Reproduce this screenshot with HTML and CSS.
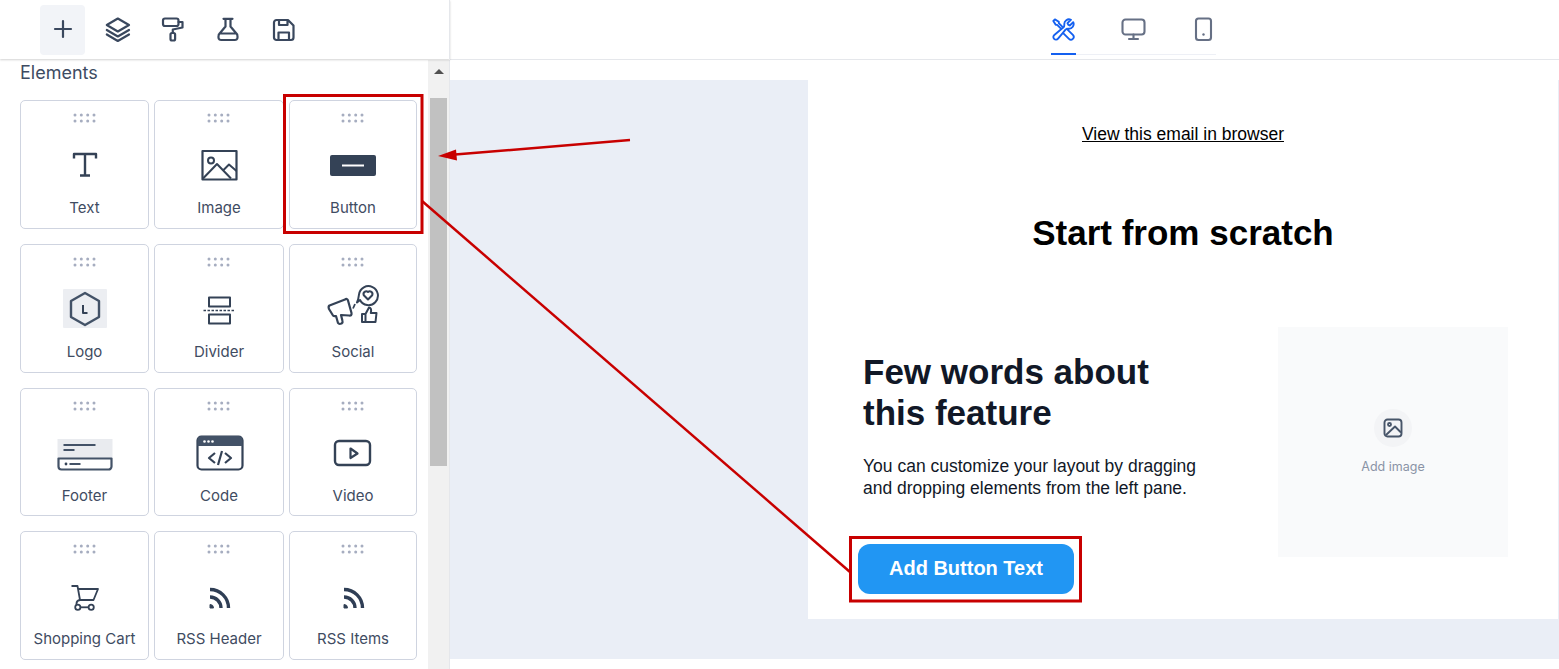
FILE: index.html
```html
<!DOCTYPE html>
<html>
<head>
    <meta charset='utf-8'>
    <title>Email Builder</title>
    <link rel="stylesheet" href="styles.css">
</head>
<body>
    <svg class="svg-defs" width="0" height="0">
        <symbol id="dots" viewBox="0 0 24 10">
            <g fill="#a6adc0">
                <circle cx="2" cy="2" r="1.500"/><circle cx="8.300" cy="2" r="1.500"/><circle cx="14.700" cy="2" r="1.500"/><circle cx="21" cy="2" r="1.500"/>
                <circle cx="2" cy="8" r="1.500"/><circle cx="8.300" cy="8" r="1.500"/><circle cx="14.700" cy="8" r="1.500"/><circle cx="21" cy="8" r="1.500"/>
            </g>
        </symbol>
        <symbol id="rss" viewBox="0 0 56 48">
            <path d="M19 17.500A18.500 18.500 0 0 1 37.500 36M19 25A11 11 0 0 1 30 36" fill="none" stroke="#2f3e55" stroke-width="3.400"/>
            <path d="M19 32.500a3.500 3.500 0 0 1 3.500 3.500h-3.500z" fill="#2f3e55"/>
        </symbol>
    </svg>

    <div class="div-app">
        <div class="div-side">
            <div class="div-toolbar">
                <button class="btn-tool btn-active">
                    <svg class="ico-28" viewBox="0 0 28 28"><path d="M14 6v16M6 14h16" stroke-width="2.200"/></svg>
                </button>
                <button class="btn-tool">
                    <svg class="ico-28" viewBox="0 0 28 28"><path d="M13.800 3.500L2.800 10l11 6.500L25 10zM2.800 15l11 6.500L25 15M2.800 19.500l11 6.500L25 19.500"/></svg>
                </button>
                <button class="btn-tool">
                    <svg class="ico-28" viewBox="0 0 28 28"><rect x="4" y="3.500" width="15.500" height="7.500" rx="2"/><path d="M19.500 7H23.500V12.500L13.800 14.500V18"/><rect x="11.500" y="18" width="4.600" height="7.500" rx="1.500"/></svg>
                </button>
                <button class="btn-tool">
                    <svg class="ico-28" viewBox="0 0 28 28"><path d="M9.500 3.800h9M11.500 4v7.500L4.800 19.500Q3.500 25 7 25h14q3.500 0 2.200-5.500L16.500 11.500V4M5.500 18.500h17"/></svg>
                </button>
                <button class="btn-tool">
                    <svg class="ico-28" viewBox="0 0 28 28"><path d="M7.500 5H19L24.500 10.500V22.500A2.500 2.500 0 0 1 22 25H7.500A2.500 2.500 0 0 1 5 22.500V7.500A2.500 2.500 0 0 1 7.500 5zM10 5.500V10H18.500V5.500M9.500 24.500V17.500H20V24.500"/></svg>
                </button>
            </div>

            <div class="div-panel">
                <div class="div-elements">
                    <div class="lbl-elements">Elements</div>
                    <div class="div-grid">
                        <div class="div-card">
                            <svg class="ico-dots"><use href="#dots"/></svg>
                            <svg class="ico-card" viewBox="0 0 56 48"><path d="M17 17.500V13H39V17.500M28 13V34.500M23 34.500H33" stroke-width="2.400"/></svg>
                            <label>Text</label>
                        </div>
                        <div class="div-card">
                            <svg class="ico-dots"><use href="#dots"/></svg>
                            <svg class="ico-card" viewBox="0 0 56 48"><rect x="11.500" y="10" width="34" height="28.500"  stroke-width="2.200"/><circle cx="20" cy="19.500" r="3" stroke-width="2"/><path d="M12 37.500L26 23L40 37.500M32.500 29L38 23.500L45.500 30" stroke-width="2"/></svg>
                            <label>Image</label>
                        </div>
                        <div class="div-card">
                            <svg class="ico-dots"><use href="#dots"/></svg>
                            <svg class="ico-card" viewBox="0 0 56 48"><rect x="5" y="14" width="46" height="21" rx="2" fill="#344256" stroke="none"/><path d="M17 24.500H39" stroke="#fff" stroke-width="2"/></svg>
                            <label>Button</label>
                        </div>
                        <div class="div-card">
                            <svg class="ico-dots"><use href="#dots"/></svg>
                            <svg class="ico-card" viewBox="0 0 56 48"><rect x="6" y="4" width="44" height="39" rx="1" fill="#eceef2" stroke="none"/><path d="M28 8L42 16V32L28 40L14 32V16z" stroke-width="2.400" stroke="#435267"/><path d="M26 20V28H30.500" stroke-width="2"/></svg>
                            <label>Logo</label>
                        </div>
                        <div class="div-card">
                            <svg class="ico-dots"><use href="#dots"/></svg>
                            <svg class="ico-card" viewBox="0 0 56 48"><rect x="18" y="12.500" width="21" height="9" stroke-width="2"/><rect x="18" y="29.500" width="21" height="9" stroke-width="2"/><path d="M12.500 25.500H44.500" stroke-width="1.300" stroke-dasharray="2.500 1.500"/></svg>
                            <label>Divider</label>
                        </div>
                        <div class="div-card">
                            <svg class="ico-dots"><use href="#dots"/></svg>
                            <svg class="ico-card ico-social" viewBox="0 0 56 48"><path d="M4.500 20.500Q3 21.500 4 24L8 30.500Q9 31.500 11 31L13 38Q14 39.500 16.500 38.500Q18 37.500 17.500 36L16 30L24 30.500Q27 31 26.500 28L23 15.500Q22 13 20 14.500z" stroke-width="2.200"/><path d="M28 23.500L30 19" stroke-width="1.800"/><path d="M32 17.500L35 15A9.500 9.500 0 1 0 34 9.500Q33.500 14 32 17.500z" stroke-width="2"/><path d="M43 14.500L38.800 10.200A2.700 2.700 0 0 1 43 7A2.700 2.700 0 0 1 47.200 10.200z" stroke-width="2"/><path d="M37 29H40.500V37H37zM40.500 29L44 22.500Q47 23 45.800 28H51.500L50.500 37H40.500" stroke-width="2"/></svg>
                            <label>Social</label>
                        </div>
                        <div class="div-card">
                            <svg class="ico-dots"><use href="#dots"/></svg>
                            <svg class="ico-card" viewBox="0 0 56 48"><rect x="0.500" y="10" width="55" height="20" fill="#e9ebef" stroke="none"/><path d="M6.500 16H38.500M6.500 21H17.500M12.500 35H23.500" stroke-width="2" stroke="#435267"/><path d="M1.500 29.500H54.500V37.500A3 3 0 0 1 51.500 40.500H4.500A3 3 0 0 1 1.500 37.500z" stroke-width="2.200" stroke="#435267"/><circle cx="9" cy="35" r="1.400" fill="#344256" stroke="none"/></svg>
                            <label>Footer</label>
                        </div>
                        <div class="div-card">
                            <svg class="ico-dots"><use href="#dots"/></svg>
                            <svg class="ico-card" viewBox="0 0 56 48"><rect x="6.500" y="7.500" width="45" height="33" rx="4" stroke-width="2.200"/><path d="M6.500 17V11A4 4 0 0 1 10.500 7H47.500A4 4 0 0 1 51.500 11V17z" fill="#435267" stroke="none"/><g fill="#fff" stroke="none"><circle cx="13.500" cy="12.500" r="1.300"/><circle cx="17.500" cy="12.500" r="1.300"/><circle cx="21.500" cy="12.500" r="1.300"/></g><path d="M24 24L18 29L24 34M31 22L27 36M34 24L40 29L34 34" stroke-width="2.200"/></svg>
                            <label>Code</label>
                        </div>
                        <div class="div-card">
                            <svg class="ico-dots"><use href="#dots"/></svg>
                            <svg class="ico-card" viewBox="0 0 56 48"><rect x="10" y="12" width="35" height="24" rx="4" stroke-width="2.400"/><path d="M25.500 19.500L32.500 24.500L25.500 29z" stroke-width="2.200"/></svg>
                            <label>Video</label>
                        </div>
                        <div class="div-card">
                            <svg class="ico-dots"><use href="#dots"/></svg>
                            <svg class="ico-card" viewBox="0 0 56 48"><path d="M14.500 14H20.500L23 28M20.500 17H41L36.500 28H23Q19.500 28.500 19.500 31.500V33" stroke-width="1.800"/><circle cx="20.800" cy="35.300" r="2.600" stroke-width="1.800"/><circle cx="34.200" cy="35.300" r="2.600" stroke-width="1.800"/><path d="M23.500 35.300H31.500" stroke-width="1.800"/></svg>
                            <label>Shopping Cart</label>
                        </div>
                        <div class="div-card">
                            <svg class="ico-dots"><use href="#dots"/></svg>
                            <svg class="ico-card"><use href="#rss"/></svg>
                            <label>RSS Header</label>
                        </div>
                        <div class="div-card">
                            <svg class="ico-dots"><use href="#dots"/></svg>
                            <svg class="ico-card"><use href="#rss"/></svg>
                            <label>RSS Items</label>
                        </div>
                    </div>
                </div>
                <div class="div-scroll">
                    <div class="div-scroll-arrow"></div>
                    <div class="div-scroll-thumb"></div>
                </div>
            </div>
        </div>

        <div class="div-main">
            <div class="div-topbar">
                <div class="div-tabs">
                    <div class="div-tab tab-active">
                        <svg class="ico-tab" viewBox="0 0 24 24" stroke-width="1.800"><path d="M11.420 15.170L17.250 21A2.652 2.652 0 0 0 21 17.250l-5.877-5.877M11.420 15.170l2.496-3.030c.317-.384.740-.626 1.208-.766M11.420 15.170l-4.655 5.653a2.548 2.548 0 1 1-3.586-3.586l6.837-5.630m5.108-.233c.550-.164 1.163-.188 1.743-.140a4.500 4.500 0 0 0 4.486-6.336l-3.276 3.277a3.004 3.004 0 0 1-2.250-2.250l3.276-3.276a4.500 4.500 0 0 0-6.336 4.486c.091 1.076-.071 2.264-.904 2.950l-.102.085m-1.745 1.437L5.909 7.500H4.500L2.250 3.750l1.500-1.500L7.500 4.500v1.409l4.260 4.260m-1.745 1.437 1.745-1.437"/></svg>
                    </div>
                    <div class="div-tab">
                        <svg class="ico-tab" viewBox="0 0 25 25" stroke-width="2.100"><rect x="1.500" y="2.500" width="22" height="15" rx="3"/><path d="M12.500 17.500V21.500M8 22H17"/></svg>
                    </div>
                    <div class="div-tab">
                        <svg class="ico-tab" viewBox="0 0 25 25" stroke-width="2.100"><rect x="5" y="1.500" width="15" height="21.500" rx="2.500"/><circle cx="12.500" cy="17.500" r="1.200" fill="#667085" stroke="none"/></svg>
                    </div>
                </div>
            </div>

            <div class="div-canvas">
                <div class="div-email">
                    <div class="div-preheader"><a href="#">View this email in browser</a></div>
                    <h1>Start from scratch</h1>
                    <div class="div-feature">
                        <div class="div-copy">
                            <h2>Few words about this feature</h2>
                            <p>You can customize your layout by dragging and dropping elements from the left pane.</p>
                            <button class="btn-add">Add Button Text</button>
                        </div>
                        <div class="div-addimage">
                            <div class="div-circle">
                                <svg viewBox="0 0 20 20" class="ico-addimage"><rect x="1.500" y="1.500" width="17" height="17" rx="3"/><circle cx="6.500" cy="6.500" r="1.500"/><path d="M3 17L12 8.500L18 14.500"/></svg>
                            </div>
                            <label>Add image</label>
                        </div>
                    </div>
                </div>
            </div>
        </div>
    </div>

    <!-- callouts drawn over the screenshot -->
    <svg class="svg-marks" viewBox="0 0 1559 669">
        <g fill="none" stroke="#c80000">
            <rect x="284.500" y="95.500" width="137.500" height="137" stroke-width="3"/>
            <rect x="850.500" y="537.500" width="230" height="63.500" stroke-width="3"/>
            <path d="M422 201L850 572" stroke-width="2.500"/>
            <path d="M630 140L452 154.800" stroke-width="2.500"/>
        </g>
        <path d="M438 156L456 149.500L457 160.500z" fill="#c80000"/>
    </svg>
</body>
</html>
```

FILE: styles.css
```css
/* reset */
body {
    margin: 0;
    padding: 0;
    width: 1559px;
    height: 669px;
    overflow: hidden;
    background-color: white;
    font-family: "Liberation Sans", Arial, sans-serif;
    position: relative;
}

button {
    border: none;
    background: none;
    padding: 0;
    font-family: inherit;
}

/* setup */
.svg-defs {
    display: block;
    height: 0;
}

.div-app {
    display: grid;
    grid-template-columns: 450px 1fr;
    height: 669px;
}

/* left side */
.div-side {
    display: flex;
    flex-direction: column;
    min-height: 0;
}

.div-toolbar {
    height: 59px;
    padding: 5px 0 4px 40px;
    box-sizing: border-box;
    display: flex;
    align-items: flex-start;
    gap: 10px;
    box-shadow: 0 1px 2px rgba(0, 0, 0, 0.18);
    position: relative;
    border-right: 1px solid #e5e7eb;
}

.btn-tool {
    width: 45px;
    height: 50px;
    padding-bottom: 2px;
    border-radius: 4px;
    display: flex;
    align-items: center;
    justify-content: center;
}

.btn-active {
    background-color: #f2f4f8;
}

.ico-28 {
    width: 28px;
    height: 28px;
    fill: none;
    stroke: #3a485e;
    stroke-width: 2.200;
    stroke-linejoin: round;
    stroke-linecap: round;
}

.div-panel {
    flex-grow: 1;
    display: flex;
    min-height: 0;
    padding-top: 1px;
}

.div-elements {
    width: 428px;
    padding-left: 20px;
    box-sizing: border-box;
}

.lbl-elements {
    font-family: Inter, sans-serif;
    font-size: 18px;
    line-height: 26px;
    color: #3d4b62;
    margin-bottom: 14px;
}

.div-grid {
    display: grid;
    grid-template-columns: 134px 135px 128px;
    grid-template-rows: 129px 129px 128px 129px;
    row-gap: 15px;
}

.div-card {
    width: auto;
    margin-right: 5px;
    border: 1px solid #cfd4e0;
    border-radius: 5px;
    box-sizing: border-box;
    padding-top: 12px;
    display: flex;
    flex-direction: column;
    align-items: center;
}

.div-grid .div-card:nth-child(3n) {
    margin-right: 0;
}

.ico-dots {
    width: 24px;
    height: 10px;
    flex-shrink: 0;
}

.ico-card {
    width: 56px;
    height: 48px;
    margin-top: 18px;
    flex-shrink: 0;
    fill: none;
    stroke: #344256;
    stroke-linejoin: round;
}

.div-card label {
    margin-top: 10px;
    font-family: Inter, sans-serif;
    font-size: 15px;
    line-height: 18px;
    color: #3f4c62;
}

.div-scroll {
    width: 21px;
    background-color: #f1f1f1;
    border-right: 1px solid #e5e7eb;
    display: flex;
    flex-direction: column;
    align-items: center;
}

.div-scroll-arrow {
    margin-top: 9px;
    border-left: 5px solid transparent;
    border-right: 5px solid transparent;
    border-bottom: 5px solid #505050;
}

.div-scroll-thumb {
    margin-top: 24px;
    width: 17px;
    height: 368px;
    background-color: #c1c1c1;
}

/* right side */
.div-main {
    display: flex;
    flex-direction: column;
    min-width: 0;
}

.div-topbar {
    height: 60px;
    box-sizing: border-box;
    border-bottom: 1px solid #e5e7eb;
    padding-left: 601px;
}

.div-tabs {
    width: 165px;
    height: 55px;
    box-sizing: border-box;
    display: flex;
    gap: 45px;
    border-bottom: 1px solid #eef0f6;
}

.div-tab {
    width: 25px;
    height: 55px;
    box-sizing: border-box;
    padding-top: 17px;
    display: flex;
    justify-content: center;
    align-items: flex-start;
}

.tab-active {
    border-bottom: 2px solid #1460f0;
}

.ico-tab {
    width: 25px;
    height: 25px;
    fill: none;
    stroke: #667085;
    stroke-linejoin: round;
    stroke-linecap: round;
}

.tab-active .ico-tab {
    stroke: #1460f0;
}

.div-canvas {
    margin-top: 20px;
    height: 579px;
    background-color: #eaeef6;
    padding-left: 358px;
    padding-right: 1px;
    box-sizing: border-box;
}

.div-email {
    height: 539px;
    background-color: white;
}

.div-preheader {
    height: 108px;
    display: flex;
    align-items: center;
    justify-content: center;
    font-size: 17.500px;
}

.div-preheader a {
    color: black;
    text-decoration: underline;
}

.div-email h1 {
    margin: 0;
    height: 90px;
    line-height: 90px;
    text-align: center;
    font-size: 35px;
    color: black;
}

.div-feature {
    margin-top: 49px;
    padding: 0 50px 0 55px;
    display: flex;
    justify-content: space-between;
    align-items: flex-start;
}

.div-copy {
    width: 345px;
    padding-top: 24px;
}

.div-copy h2 {
    margin: 0 0 22px 0;
    font-size: 35px;
    line-height: 41px;
    color: #111827;
}

.div-copy p {
    margin: 0 0 45px 0;
    font-size: 17.500px;
    line-height: 22px;
    color: #111827;
}

.btn-add {
    display: block;
    width: 216px;
    height: 50px;
    margin-left: -5px;
    padding-bottom: 2px;
    border-radius: 12px;
    background-color: #2196f3;
    color: white;
    font-size: 20px;
    font-weight: bold;
}

.div-addimage {
    width: 230px;
    height: 230px;
    box-sizing: border-box;
    padding-top: 82px;
    background-color: #f9fafb;
    display: flex;
    flex-direction: column;
    align-items: center;
}

.div-circle {
    width: 38px;
    height: 38px;
    border-radius: 50%;
    background-color: #f3f4f6;
    display: flex;
    align-items: center;
    justify-content: center;
}

.ico-addimage {
    width: 20px;
    height: 20px;
    fill: none;
    stroke: #475569;
    stroke-width: 1.900;
    stroke-linejoin: round;
}

.div-addimage label {
    margin-top: 12px;
    font-family: Inter, sans-serif;
    font-size: 12.500px;
    line-height: 16px;
    color: #8a93a6;
}

.svg-marks {
    position: absolute;
    left: 0;
    top: 0;
    width: 1559px;
    height: 669px;
    pointer-events: none;
}
```
